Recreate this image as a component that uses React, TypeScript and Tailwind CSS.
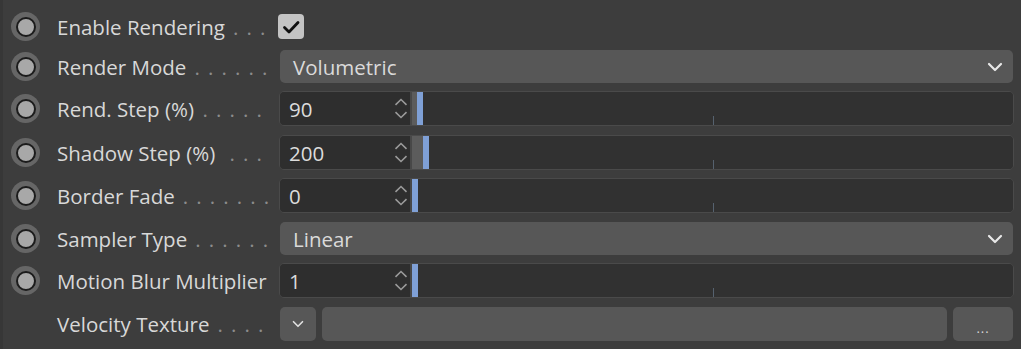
import React from "react";

type Row = {
  label: string;
  dots: number;
  kind: "check" | "select" | "number" | "link";
  value?: string | number;
  gap: string;
  radio?: boolean;
};

const rows: Row[] = [
  { label: "Enable Rendering", dots: 3, kind: "check", gap: "mt-[9px]", radio: true },
  { label: "Render Mode", dots: 6, kind: "select", value: "Volumetric", gap: "mt-[5px]", radio: true },
  { label: "Rend. Step (%)", dots: 5, kind: "number", value: 90, gap: "mt-[7px]", radio: true },
  { label: "Shadow Step (%)", dots: 3, kind: "number", value: 200, gap: "mt-[9px]", radio: true },
  { label: "Border Fade", dots: 7, kind: "number", value: 0, gap: "mt-[8px]", radio: true },
  { label: "Sampler Type", dots: 6, kind: "select", value: "Linear", gap: "mt-[8px]", radio: true },
  { label: "Motion Blur Multiplier", dots: 0, kind: "number", value: 1, gap: "mt-[7px]", radio: true },
  { label: "Velocity Texture", dots: 4, kind: "link", gap: "mt-[8px]" },
];

function Chevron({ className }: { className?: string }) {
  return (
    <svg viewBox="0 0 16 10" className={className} fill="none">
      <path d="M2 2 L8 8 L14 2" stroke="currentColor" strokeWidth="2.2" strokeLinecap="round" strokeLinejoin="round" />
    </svg>
  );
}

function Radio({ show }: { show?: boolean }) {
  if (!show) return <div className="w-[29px] h-[29px] flex-none" />;
  return (
    <div className="w-[29px] h-[29px] flex-none rounded-full bg-[#666666] flex items-center justify-center">
      <div className="w-[20px] h-[20px] rounded-full border-2 border-[#1c1c1c] bg-[#a8a8a8]" />
    </div>
  );
}

function Checkbox() {
  return (
    <div className="ml-[-1px] w-[26px] h-[25px] rounded-[4px] bg-[#c4c4c4] flex items-center justify-center">
      <svg viewBox="0 0 26 25" className="w-[26px] h-[25px]" fill="none">
        <path d="M6.5 13.5 L11 18 L20 8.5" stroke="#111" strokeWidth="2.8" strokeLinecap="round" strokeLinejoin="round" />
      </svg>
    </div>
  );
}

function Select({ value }: { value: string }) {
  return (
    <div className="mx-px h-[33px] flex-1 rounded-[5px] bg-[#575757] flex items-center pl-[13px] pr-[10px]">
      <span className="flex-1 text-[#dadada] pt-px">{value}</span>
      <Chevron className="w-[16px] h-[10px] text-[#e8e8e8]" />
    </div>
  );
}

function NumberField({ value }: { value: number }) {
  const offset = Math.max(0, value * 0.055);
  return (
    <div className="flex-1 h-[35px] flex rounded-[5px] border border-[#4a4a4a] overflow-hidden">
      <div className="w-[132px] flex-none flex items-center bg-[#2e2e2e] pl-[9px] pr-[2px] border-r-2 border-[#484848]">
        <span className="flex-1 text-[#dcdcdc] pt-px">{value}</span>
        <div className="flex flex-col gap-[5px] text-[#9a9a9a]">
          <svg viewBox="0 0 14 8" className="w-[14px] h-[8px]" fill="none">
            <path d="M1.5 6.8 L7 1.5 L12.5 6.8" stroke="currentColor" strokeWidth="1.6" />
          </svg>
          <svg viewBox="0 0 14 8" className="w-[14px] h-[8px]" fill="none">
            <path d="M1.5 1.2 L7 6.5 L12.5 1.2" stroke="currentColor" strokeWidth="1.6" />
          </svg>
        </div>
      </div>
      <div className="relative flex-1 bg-[#313131] overflow-hidden">
        <div className="absolute inset-y-0 left-0 bg-[#5c5c5c]" style={{ width: offset }} />
        <div className="absolute inset-y-0 w-[6px] bg-[#7fa0d6]" style={{ left: offset }} />
        <div className="absolute bottom-0 left-1/2 w-px h-[9px] bg-[#56626f]" />
      </div>
    </div>
  );
}

function LinkField() {
  return (
    <div className="flex-1 flex gap-[6px] mx-px h-[34px]">
      <div className="w-[36px] rounded-[5px] bg-[#575757] flex items-center justify-center">
        <Chevron className="w-[12px] h-[8px] text-[#e0e0e0]" />
      </div>
      <div className="flex-1 rounded-[5px] bg-[#575757]" />
      <div className="w-[60px] rounded-[5px] bg-[#575757] flex items-center justify-center pt-[10px] text-[13px] text-[#d6d6d6] tracking-[1px]">
        ...
      </div>
    </div>
  );
}

export default function App() {
  return (
    <div className="w-[1021px] h-[349px] overflow-hidden bg-[#3d3d3d] border-l-[3px] border-[#373737] pl-[8px] pr-[7px] font-['Open_Sans',sans-serif] text-[20.5px] text-[#d8d8d8]">
      {rows.map((r) => (
        <div key={r.label} className={`${r.gap} h-[35px] flex items-center`}>
          <Radio show={r.radio} />
          <div className="ml-[17px] mt-[2px] w-[222px] flex-none flex items-baseline">
            <span className="whitespace-nowrap">{r.label}</span>
            <div className="ml-auto mr-[17px] flex">
              {Array.from({ length: r.dots }).map((_, i) => (
                <span key={i} className="w-[13.5px] text-right text-[#8c8c8c]">.</span>
              ))}
            </div>
          </div>
          {r.kind === "check" && <Checkbox />}
          {r.kind === "select" && <Select value={String(r.value)} />}
          {r.kind === "number" && <NumberField value={Number(r.value)} />}
          {r.kind === "link" && <LinkField />}
        </div>
      ))}
    </div>
  );
}
